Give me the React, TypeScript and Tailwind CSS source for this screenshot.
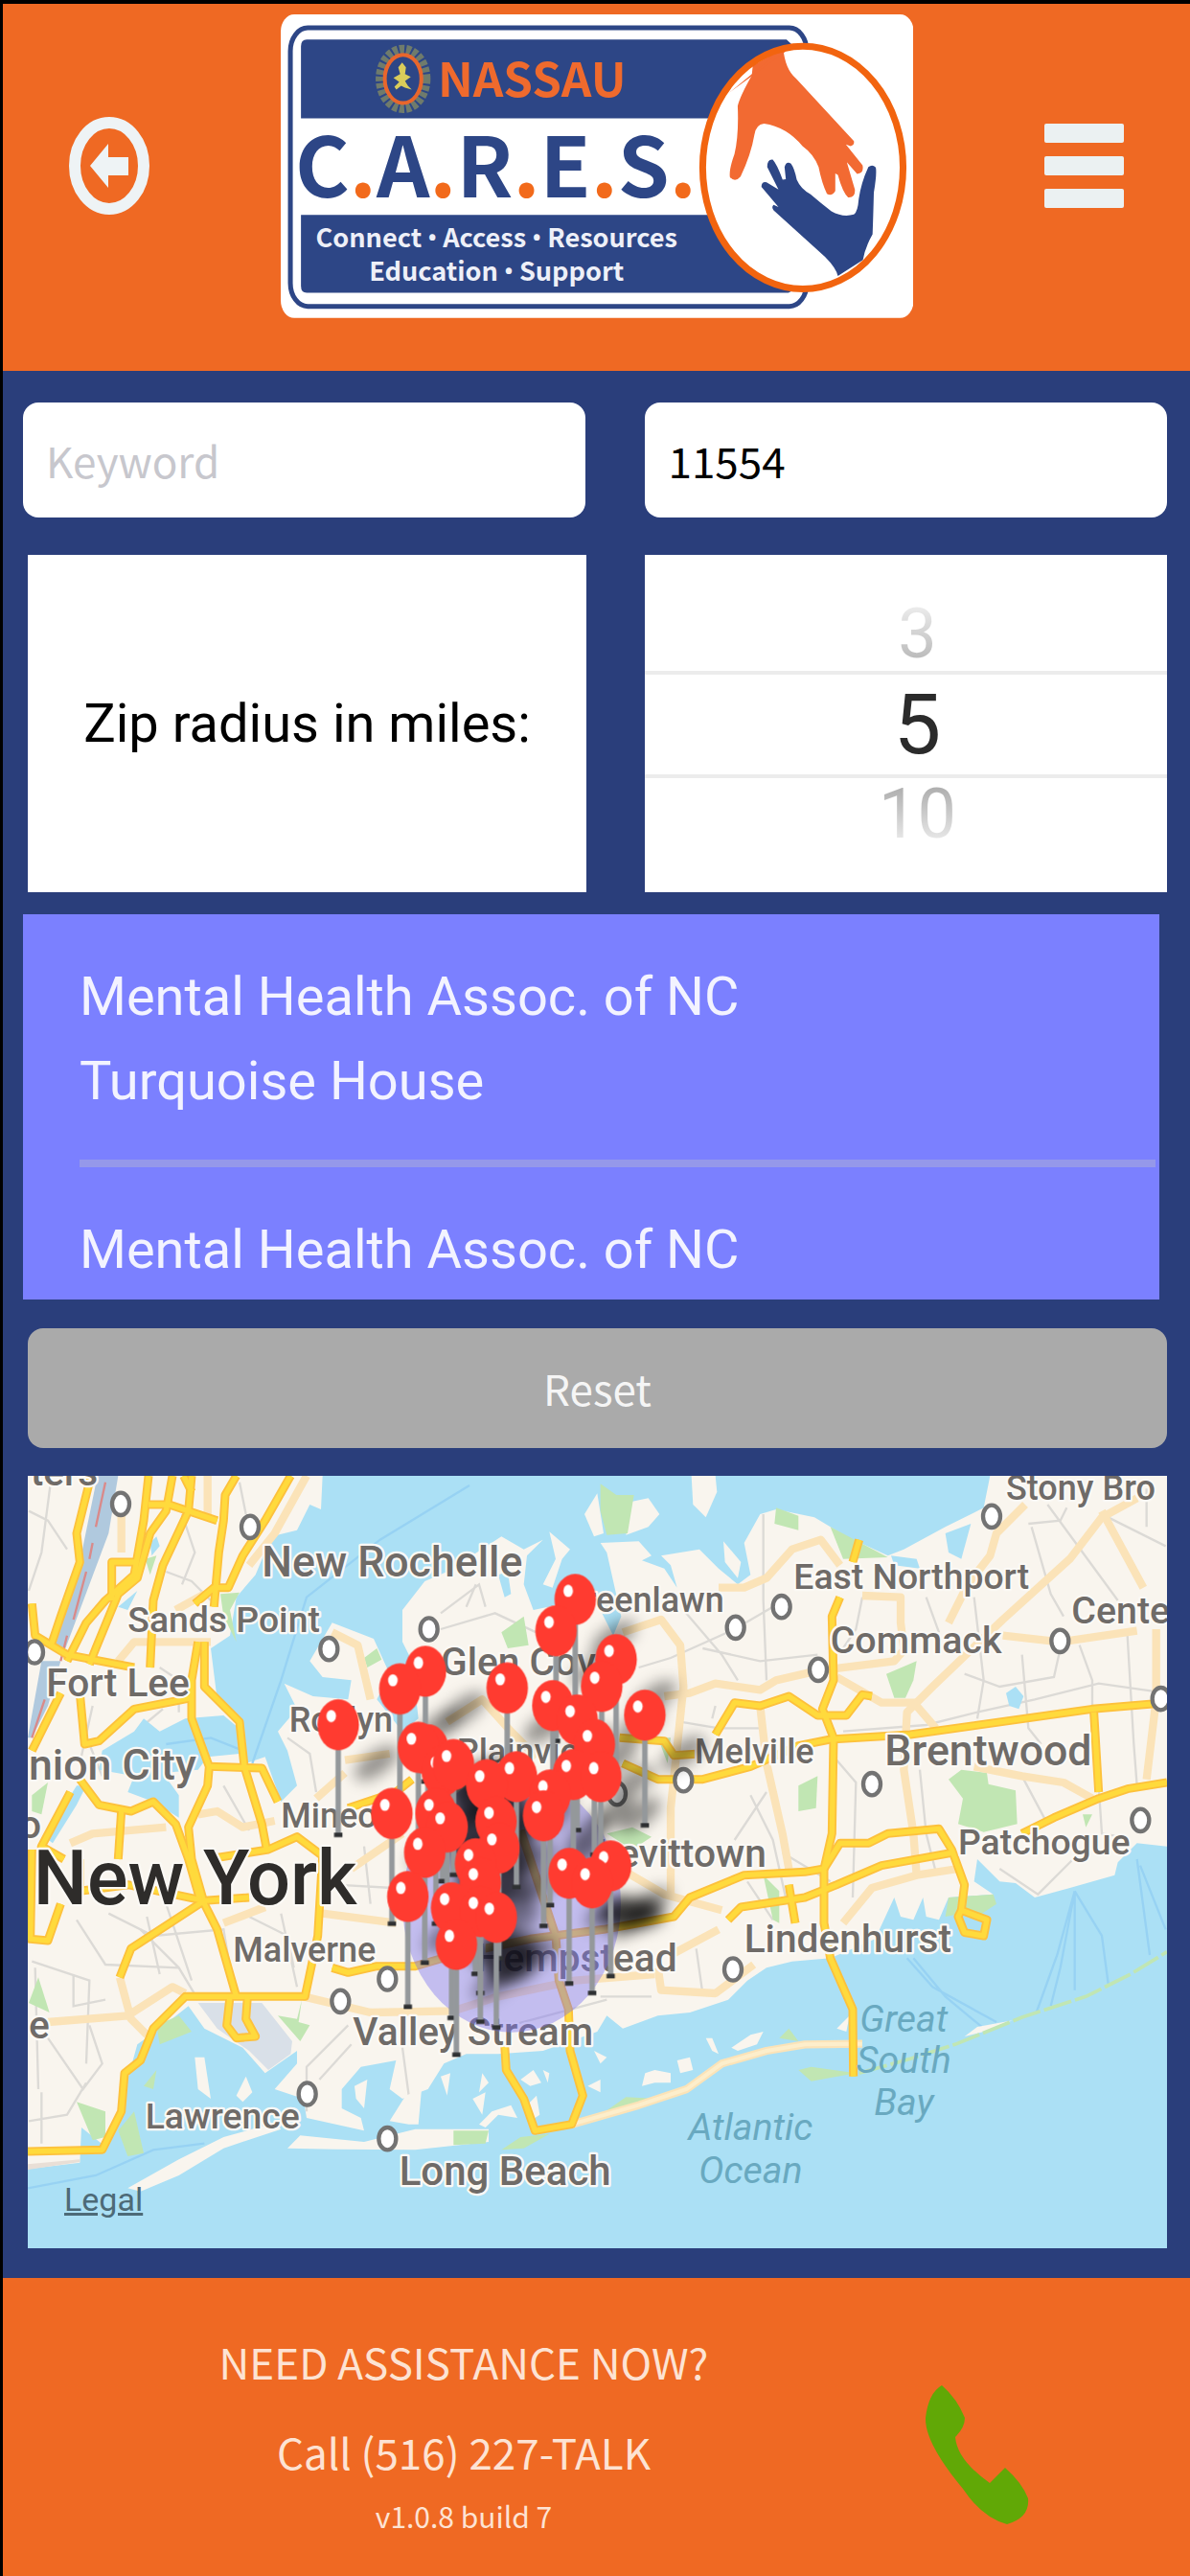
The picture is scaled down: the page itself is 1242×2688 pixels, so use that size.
import { useState } from "react";

const places = [
  { name: "New Rochelle", x: 820, y: 375, size: 134 },
  { name: "Sands Point", x: 400, y: 550, size: 112 },
  { name: "Fort Lee", x: 145, y: 750, size: 122 },
  { name: "nion City", x: 90, y: 1010, size: 134 },
  { name: "Glen Cove", x: 1380, y: 685, size: 122 },
  { name: "Roslyn", x: 905, y: 860, size: 108 },
  { name: "Mineola", x: 880, y: 1162, size: 108 },
  { name: "Malverne", x: 730, y: 1582, size: 108 },
  { name: "Valley Stream", x: 1105, y: 1842, size: 122 },
  { name: "Lawrence", x: 455, y: 2102, size: 112 },
  { name: "Long Beach", x: 1250, y: 2280, size: 126 },
  { name: "Greenlawn", x: 1755, y: 485, size: 108 },
  { name: "East Northport", x: 2485, y: 415, size: 112 },
  { name: "Commack", x: 2600, y: 615, size: 118 },
  { name: "Cente", x: 3355, y: 522, size: 118 },
  { name: "Stony Bro", x: 3150, y: 135, size: 108 },
  { name: "Plainview", x: 1430, y: 960, size: 108 },
  { name: "Melville", x: 2175, y: 960, size: 108 },
  { name: "Brentwood", x: 2770, y: 965, size: 134 },
  { name: "Patchogue", x: 3000, y: 1245, size: 112 },
  { name: "Levittown", x: 1870, y: 1285, size: 122 },
  { name: "Hempstead", x: 1490, y: 1610, size: 122 },
  { name: "Lindenhurst", x: 2330, y: 1552, size: 122 },
];

const waterNames = [
  { name: "Great", x: 2830, y: 1800 },
  { name: "South", x: 2830, y: 1930 },
  { name: "Bay", x: 2830, y: 2060 },
  { name: "Atlantic", x: 2350, y: 2140 },
  { name: "Ocean", x: 2350, y: 2275 },
];

const towns = [
  [378, 148], [783, 220], [108, 612], [1343, 540], [1030, 602], [1066, 1705],
  [1213, 1635], [962, 1995], [1213, 2135], [2303, 535], [2447, 470], [3105, 187],
  [2562, 667], [3319, 577], [2730, 1025], [3635, 758], [3571, 1138], [2140, 1013],
  [2295, 1605], [1932, 1055],
];

const pins = [
  [1801, 447], [1741, 545], [1332, 672], [1252, 727], [1929, 635], [1884, 719],
  [1588, 724], [1731, 779], [1807, 824], [1059, 839], [2019, 809], [1861, 901],
  [1340, 917], [1310, 910], [1385, 984], [1420, 964], [1795, 995], [1881, 1002],
  [1617, 1002], [1524, 1027], [1722, 1059], [1227, 1117], [1365, 1117], [1702, 1124],
  [1400, 1159], [1553, 1142], [1562, 1225], [1330, 1239], [1489, 1274], [1912, 1281],
  [1782, 1304], [1854, 1334], [1504, 1334], [1277, 1377], [1414, 1412], [1504, 1424],
  [1554, 1442], [1429, 1527],
];

const highways = [
  "M285 60L240 240L250 330L190 500L160 590",
  "M465 60L450 200L420 370L330 450L270 520L210 640",
  "M540 60L520 170L470 240L430 380L370 430L300 600L280 650",
  "M600 60L590 170L510 340L480 450L470 660",
  "M575 60L600 110M465 150L530 150L680 200",
  "M350 450L350 330L430 330",
  "M740 60L705 120L700 200L685 300L670 470",
  "M910 60L830 200L760 310L715 410L670 410L610 460",
  "M100 460L110 560L210 620L420 660",
  "M190 740L100 920",
  "M250 740L265 900L310 890L420 790L600 755",
  "M620 580L600 700L600 820L655 970L650 1030L590 1160L600 1260L640 1400L680 1480L740 1690",
  "M640 580L640 720L750 830L765 970L820 1150L835 1230",
  "M655 970L820 975L870 1080",
  "M250 1010L310 1090L410 1110L480 1080L550 1150L590 1260L630 1400",
  "M380 1110L370 1260",
  "M220 1050L130 1220L200 1260",
  "M250 1260L250 1360L400 1340L640 1390L780 1380",
  "M650 1260L840 1230L930 1190L1010 1250L995 1500L955 1690L580 1690L480 1790L440 1890L390 1930L380 2050L320 2170L87 2175",
  "M640 1390L410 1540L375 1630",
  "M100 1230L95 1510L150 1515L190 1400",
  "M720 1690L710 1780L740 1820L800 1815L770 1760L775 1690",
  "M1040 1600L1090 1615L1180 1595L1300 1595L1420 1560L1660 1510L1890 1480L2110 1440L2160 1380L2330 1310L2520 1300L2580 1290",
  "M1090 1100L1240 1050L1290 1010",
  "M1940 880L2080 890L2110 935L2190 930",
  "M1950 960L2060 1010L2200 1010L2350 970L2500 905L2600 885L2850 870L3420 790L3654 770",
  "M2240 870L2300 770L2380 780L2470 750L2560 810L2650 810L2700 745L2730 750",
  "M2690 260L2670 330M2630 440L2605 500L2610 700L2575 790L2610 880L2605 1180L2580 1290L2580 1460L2600 1570L2670 1730L2672 1940",
  "M2580 1290L2630 1210L2720 1210L2780 1180L2940 1165L2980 1230L3020 1340L3010 1420",
  "M2280 1450L2320 1410L2520 1380L2620 1340L2760 1280L2980 1240",
  "M2470 1340L2490 1460",
  "M3425 800L3440 1050M3200 1180L3300 1130L3440 1070L3530 1040L3654 1020",
  "M3010 1420L3090 1450L3080 1500L3020 1490L3000 1440Z",
  "M1580 1840L1585 1920L1640 2010L1675 2110L1790 2090L1825 2000L1785 1860L1780 1730L1750 1640L1740 1500L1630 1170",
];

const roads = [
  "M960 60L860 240L780 340M650 60L650 200M380 180L380 300",
  "M550 480L640 430M370 640L420 580L660 580",
  "M1040 550L1120 590L1160 760M1080 950L1220 930M990 1070L1080 990",
  "M620 1120L680 1110L760 1160L860 1140M220 1210L290 1180L520 1160",
  "M700 1460L830 1410M1010 1430L1240 1460M1100 1290L1260 1180",
  "M150 1770L400 1750L540 1660L580 1680M375 1630L410 1760L460 1810",
  "M950 1690L1160 1740L1420 1735L1560 1690L1800 1640L2050 1620",
  "M1400 830L1510 760L1600 860L1680 940",
  "M1950 550L2070 510L2130 590L2140 720L2100 1100L2100 1380",
  "M2250 410L2330 410L2400 380L2480 290L2570 260L2630 340",
  "M2080 750L2160 740L2240 710L2380 730L2430 700L2560 670L2800 640L2870 560",
  "M2380 780L2400 960L2450 1180L2470 1290",
  "M2700 435L2820 440L2820 520L2830 600M2620 690L2760 770L2870 770",
  "M3210 150L3120 240L3100 310L3030 400L2970 520",
  "M3560 130L3450 190L3350 320L3140 510L2920 720L2840 800L2830 980L2860 1180L2870 1310",
  "M3450 170L3580 410M3620 540L3620 760L3590 1010",
  "M3140 560L3320 580L3560 545M2870 780L2930 850",
  "M3050 970L3200 1000L3330 1020L3420 1070",
  "M2640 1460L2730 1350L2870 1310L3000 1290",
  "M1960 1300L2080 1370L2260 1420M2100 1560L2250 1480M2060 1600L2070 1670L2240 1680L2360 1590",
];

const streets = [
  "M90 170L150 200L210 290M160 70L130 300L90 420M750 80L770 180M520 360L600 390L660 450M570 180L610 300L570 400",
  "M290 780L250 960M450 840L510 790M500 660L560 700L560 800M700 1030L780 1170M320 1000L280 900",
  "M100 1580L280 1640L270 1900M110 1600L120 1980M230 1620L230 1720L330 1700M240 1450L330 1590L560 1600",
  "M150 1820L260 1980L320 1900L280 1780M90 2080L210 2060L270 1960M130 1990L130 2150M440 1480L560 1600L620 1700",
  "M460 1440L500 1620M520 1400L600 1640M340 1430L480 1500L700 1480L720 1600M780 1440L900 1500L920 1600M880 1430L930 1660",
  "M1090 1780L960 1910L960 2050M1100 1840L1000 1950M1260 1850L1280 2000L1260 2110M1050 1340L1230 1350M1140 1220L1160 1400",
  "M1380 490L1500 400L1520 470M1380 540L1550 490L1700 560M1490 400L1460 470M900 880L970 930L990 1050",
  "M2000 660L2100 630L2300 540L2420 470M2140 480L2260 620L2310 700M2200 600L2380 640L2560 620M2390 180L2390 450L2400 700",
  "M2130 830L2250 850L2380 850M2400 1050L2300 1200M2240 780L2230 820M2350 1060L2420 1200L2460 1380M2620 950L2680 1020L2670 1380",
  "M2700 440L2680 540L2640 600M2900 440L2940 550M3050 440L3080 700L3060 820M3020 680L3130 720L3300 690L3320 600M3230 220L3290 430L3330 500M3280 150L3500 450M3470 190L3650 280M3590 100L3590 220",
  "M2640 860L2900 840L3060 800L3240 760L3440 710L3650 740M3200 620L3220 850L3260 900M3380 590L3420 700L3420 800M3530 560L3550 900L3560 1030M2880 980L2900 1180L2930 1300M3200 1000L3280 1150M3440 1030L3450 1180L3510 1190",
  "M3130 1290L3250 1370L3360 1260M2450 1240L2600 1330M2340 1330L2420 1450M2180 1540L2200 1680M1880 1690L2040 1690M1600 1780L1900 1700M3220 210L3320 200L3340 160",
];

const parks = [
  "M1880 85L1930 120L1985 120L1965 240L1900 245L1880 170Z",
  "M1570 550L1640 500L1655 590L1590 600Z",
  "M2430 160L2500 185L2500 230L2425 210Z",
  "M2600 220L2780 315L2640 320Z",
  "M690 430L750 425L720 480L740 580L700 500Z",
  "M455 320L490 310L470 370Z",
  "M100 1060L150 1020L130 1120L100 1110Z",
  "M1140 630L1180 600L1195 635L1150 660Z",
  "M2775 680L2870 640L2860 700L2835 755L2800 755Z",
  "M2970 1010L3010 980L3090 990L3095 1025L3180 1045L3185 1150L3080 1175L3000 1150L3015 1070Z",
  "M2500 1030L2560 1000L2555 1100L2500 1110Z",
  "M2100 880L2090 960L2060 880Z",
  "M90 1710L120 1630L155 1740Z",
  "M870 1750L930 1760L945 1700L935 1770L970 1780L940 1830Z",
  "M490 1780L560 1750L600 1800L500 1840Z",
  "M370 2110L420 2050L450 2180L400 2190Z",
  "M240 2020L330 2050L330 2130L290 2140Z",
  "M450 1970L490 1920L480 1980Z",
  "M1420 2110L1530 2110L1520 2150L1420 2155Z",
  "M1570 2170L1630 2130L1720 2120L1640 2165Z",
  "M1880 2060L1960 2005L2060 2010Z",
  "M2440 1820L2470 1790L2500 1830Z",
  "M2500 1920L2540 1910L2680 1930L2540 1955Z",
  "M2960 1440L2970 1380L3110 1370L3120 1400L3060 1440L3010 1430Z",
  "M2390 1310L2440 1360L2440 1460L2420 1450Z",
  "M3390 1120L3420 1120L3400 1160Z",
  "M1900 1180L1980 1160L2040 1190L1980 1230Z",
];

const islands = [
  "M1830 180L1870 115L1890 240L1860 250Z",
  "M1980 140L2030 130L2065 180L2030 220L1960 245Z",
  "M2165 60L2240 60L2245 110L2210 190L2170 150Z",
  "M1720 235L1785 290L1760 320L1730 410L1700 400L1740 320Z",
  "M2265 265L2320 330L2310 380L2270 330Z",
  "M400 2290L560 2200L700 2130L860 2085L880 2105L700 2165L560 2250L440 2300Z",
  "M900 2165L940 2125L1140 2145L1300 2105L1530 2105L1530 2145L1300 2170L1050 2168Z",
  "M610 1880L640 1880L660 2010L620 1980Z",
  "M740 2000L770 1940L790 1990L760 2020Z",
  "M1110 1970L1150 1950L1140 2040L1115 2010Z",
  "M1270 2000L1320 1980L1310 2090L1280 2090L1220 2080Z",
  "M1380 1940L1410 1930L1400 2000Z",
  "M1480 2010L1520 1990L1510 2060Z",
  "M1630 1950L1670 1920L1695 1960L1660 1970Z",
  "M1650 2030L1680 2000L1690 2060L1660 2080Z",
  "M1500 2090L1540 2050L1600 2030L1620 2070L1560 2060L1520 2100Z",
  "M1860 1860L1900 1880L1880 1900Z",
  "M1840 1970L1880 1950L1880 1990Z",
  "M2010 1970L2020 1930L2050 1920L2100 1930L2100 1960L2050 1960Z",
  "M2120 1890L2160 1880L2170 1920L2130 1930Z",
  "M2290 1850L2350 1810L2390 1800L2370 1840L2310 1860Z",
  "M2210 1820L2230 1820L2250 1870L2230 1860Z",
  "M2620 1790L2660 1750L2650 1800Z",
  "M3020 1815L3060 1785L3170 1765L3080 1800Z",
  "M1500 1990L1510 1930L1530 1960Z",
  "M1700 1920L1720 1930L1715 1960Z",
];

function AreaMap() {
  return (
    <svg viewBox="87 60 3567 2418" className="block w-full" role="img" aria-label="Map of providers">
      <defs>
        <filter id="soft" x="-50%" y="-50%" width="200%" height="200%">
          <feGaussianBlur stdDeviation="22" />
        </filter>
      </defs>
      <rect x="87" y="60" width="3567" height="2418" fill="#f9f5ee" />
      <g fill="none" stroke="#dcdad6" strokeWidth="7">
        {streets.map((d) => <path key={d} d={d} />)}
      </g>

      {/* Water */}
      <g fill="#abe0f5">
        <path d="M1010 60L1005 165L970 150L930 230L850 250L800 370L740 440L720 560L660 600L680 760L760 830L770 960L830 940L880 1080L930 1030L900 920L870 860L930 790L890 710L980 750L1090 760L1100 700L1010 690L970 640L1040 520L1170 570L1220 680L1180 760L1260 860L1310 820L1290 640L1260 580L1260 480L1330 390L1400 360L1570 250L1640 290L1700 260L1650 310L1640 400L1670 480L1860 440L1920 560L1945 500L1900 300L1880 270L2000 265L2040 310L2010 325L2080 350L2120 410L2100 340L2070 310L2190 290L2250 350L2310 400L2350 370L2330 270L2380 180L2430 165L2550 190L2650 250L2780 310L2830 290L2960 220L3080 160L3100 60Z" />
        <path d="M2960 240L3040 210L3010 320L2970 300Z" />
        <path d="M2790 310L2870 320L2880 350L2800 340Z" />
        <path d="M1560 370L1590 360L1600 430L1580 440Z" />
        <path d="M3150 740L3180 720L3205 750L3190 790L3160 780Z" />
        <path d="M450 820L500 860L580 820L700 810L760 860L750 930L650 940L620 980L510 990L560 1060L560 1130L480 1080L400 1050L420 1000L310 980L320 920L420 860Z" />
        <path d="M240 1030L270 1030L240 1090L165 1210L145 1195L215 1070Z" />
        <path d="M470 270L490 250L500 280L475 310ZM370 470L430 420L400 480Z" />
        <path d="M87 2230L250 2210L255 2100L330 2160L380 2020L430 1840L500 1790L590 1720L640 1790L760 1850L830 1930L930 1860L930 1900L860 1980L950 2010L960 2070L1140 2110L1130 2070L1070 2040L1070 1980L1130 1910L1240 1890L1220 1980L1260 2010L1340 1980L1390 1900L1460 1870L1560 1870L1700 1860L1870 1800L1900 1750L1950 1790L2060 1750L2160 1740L2280 1700L2340 1640L2400 1600L2480 1580L2600 1570L2740 1510L2800 1380L2820 1440L2860 1450L2890 1380L2900 1440L2940 1450L2970 1380L3110 1370L3050 1330L3060 1260L3130 1330L3180 1335L3240 1380L3350 1350L3490 1310L3500 1270L3560 1210L3654 1220L3654 2478L87 2478Z" />
      </g>
      <path d="M305 60L370 60L340 240L205 600L160 590L250 330ZM130 640L190 640L150 780L100 880L87 880Z" fill="#b0c9de" />
      <path d="M330 80L300 220M290 270L280 320M270 360L230 510M210 560L190 640M140 760L100 880" fill="none" stroke="#d98a8a" strokeWidth="7" />
      <path d="M620 1710L820 1710L915 1830L910 1870L840 1920L780 1860L680 1790Z" fill="#d9e0e8" />
      <g fill="none" stroke="#97d2f3" strokeWidth="7">
        <path d="M1470 90L1190 260L960 440L880 700L790 960" />
        <path d="M520 900L660 880L760 920" />
        <path d="M87 2290L300 2250L480 2170L640 2150" />
        <path d="M3365 1360L3310 1560L3245 1740M3365 1360L3320 1600L3290 1720M3365 1360L3365 1670M3365 1360L3450 1500L3470 1650" />
        <path d="M3560 1260L3600 1560M3570 1280L3650 1480M2840 1570L2920 1660L3120 1770M2860 1570L2960 1690L3080 1790" />
      </g>
      <path d="M87 2215L250 2200L250 2208L87 2232Z" fill="#e9dfd6" />

      {/* Barrier islands and marshes */}
      <g fill="#f9f5ee">
        {islands.map((d) => <path key={d} d={d} />)}
      </g>
      <g fill="#c1e6b3">
        {parks.map((d) => <path key={d} d={d} />)}
      </g>
      <path d="M2690 1930L2850 1885L2990 1840L3200 1755L3400 1690L3540 1620L3654 1550" fill="none" stroke="#c1e6b3" strokeWidth="11" strokeDasharray="90 12" />

      <g fill="none" stroke="#fbe3b8" strokeWidth="25" strokeLinejoin="round">
        {roads.map((d) => <path key={d} d={d} />)}
        <path d="M1790 2090L2000 2030L2150 1980L2260 1900L2400 1860L2520 1840L2700 1838" />
      </g>
      <g fill="none" stroke="#fdeecb" strokeWidth="12">
        <path d="M1790 2090L2000 2030L2150 1980L2260 1900L2400 1860L2520 1840L2700 1838" />
      </g>
      <g fill="none" stroke="#fdc13c" strokeWidth="27" strokeLinejoin="round">
        {highways.map((d) => <path key={d} d={d} />)}
      </g>
      <g fill="none" stroke="#ffda3c" strokeWidth="16" strokeLinejoin="round">
        {highways.map((d) => <path key={d} d={d} />)}
      </g>

      {/* Labels */}
      <g fill="#fff" stroke="#737373" strokeWidth="13">
        {towns.map(([x, y]) => <ellipse key={`${x}-${y}`} cx={x} cy={y} rx="27" ry="35" />)}
      </g>
      <g
        fill="#6f6b68"
        stroke="#fbf9f5"
        strokeWidth="14"
        strokeLinejoin="round"
        paintOrder="stroke"
        fontFamily="Roboto, sans-serif"
        fontWeight="500"
      >
        {places.map((place) => (
          <text key={place.name} x={place.x} y={place.y} fontSize={place.size}>{place.name}</text>
        ))}
        <text x="95" y="90" fontSize="122">ters</text>
        <text x="90" y="1820" fontSize="122">e</text>
        <text x="60" y="1195" fontSize="122">o</text>
        <text x="104" y="1402" fontSize="238" fill="#2e2c2a">New York</text>
      </g>
      <g fill="#69a9c0" fontFamily="Roboto, sans-serif" fontStyle="italic" fontSize="118" textAnchor="middle">
        {waterNames.map((item) => (
          <text key={item.name} x={item.x} y={item.y}>{item.name}</text>
        ))}
      </g>

      {/* Search radius */}
      <ellipse cx="1602" cy="1400" rx="342" ry="402" fill="#7a6ff0" fillOpacity="0.42" />

      {/* Pin shadows */}
      <g filter="url(#soft)" fill="#000">
        {pins.map(([x, y]) => (
          <ellipse
            key={`${x}-${y}`}
            cx={x + 120}
            cy={y + 120}
            rx="80"
            ry="36"
            opacity="0.4"
            transform={`rotate(-35 ${x + 120} ${y + 120})`}
          />
        ))}
        <ellipse cx="1540" cy="1180" rx="130" ry="230" opacity="0.7" />
        <ellipse cx="1980" cy="1430" rx="100" ry="50" opacity="0.65" />
        <ellipse cx="1590" cy="1570" rx="90" ry="80" opacity="0.65" />
      </g>

      {/* Pins */}
      {pins.map(([x, y]) => (
        <g key={`${x}-${y}`}>
          <path d={`M${x} ${y}V${y + 345}`} stroke="#94989b" strokeWidth="17" />
          <path d={`M${x - 13} ${y + 345}H${x + 13}`} stroke="#2f3133" strokeWidth="14" />
        </g>
      ))}
      {pins.map(([x, y]) => (
        <g key={`${x}-${y}`}>
          <ellipse cx={x} cy={y} rx="65" ry="80" fill="#ff3b30" />
          <ellipse cx={x - 22} cy={y - 27} rx="15" ry="19" fill="#fff" />
        </g>
      ))}
    </svg>
  );
}

function CaresLogo() {
  return (
    <svg viewBox="295 15 657 315" className="block w-full" role="img" aria-label="Nassau C.A.R.E.S.">
      <rect x="295" y="15" width="657" height="315" rx="14" ry="18" fill="#fff" />
      <rect x="305" y="29" width="536" height="289" rx="18" ry="24" fill="none" stroke="#2d4686" strokeWidth="5" />
      <path d="M316 48Q316 41 322 41H820Q842 60 842 80V123H316ZM316 223H842V270Q842 295 822 304H322Q316 304 316 297Z" fill="#2d4686" />

      <g fill="none">
        <ellipse cx="422" cy="82" rx="24" ry="31" stroke="#6f7b6c" strokeWidth="9" strokeDasharray="5 2" />
        <ellipse cx="422" cy="82" rx="19" ry="25" stroke="#e8662c" strokeWidth="4" />
      </g>
      <path d="M421 65L425 70L424 77L430 80L424 84L427 89L431 93L424 91L420 89L415 93L413 90L418 85L412 81L419 77L417 70Z" fill="#d9cc5a" />

      <g fontFamily="'Noto Sans CJK SC', sans-serif" fontWeight="700">
        <text x="458" y="101" fontSize="49" fill="#ef6a2d">NASSAU</text>
        <text x="310" y="205" fontSize="86" fill="#2d4686">
          C<tspan fill="#f26a1b">.</tspan>A<tspan fill="#f26a1b">.</tspan>R<tspan fill="#f26a1b">.</tspan>E<tspan fill="#f26a1b">.</tspan>S<tspan fill="#f26a1b">.</tspan>
        </text>
      </g>
      {/* Roboto first only for the bullets, which are full width in the CJK face */}
      <g fontFamily="'Noto Sans CJK SC', sans-serif" fontWeight="700" fontSize="27" fill="#eef0f8" textAnchor="middle">
        <text x="519" y="257">
          Connect <tspan fontFamily="Roboto, sans-serif">•</tspan> Access <tspan fontFamily="Roboto, sans-serif">•</tspan> Resources
        </text>
        <text x="519" y="292">
          Education <tspan fontFamily="Roboto, sans-serif">•</tspan> Support
        </text>
      </g>

      <ellipse cx="837" cy="174" rx="104" ry="127" fill="#fff" />
      <g transform="translate(660 0) scale(0.3333)">
        <path d="M375 205L470 150Q475 215 510 245L690 440Q692 452 680 455L665 450L717 515Q722 540 700 542L668 505L693 590Q695 617 672 615Q655 600 640 545L632 540L632 595Q622 612 606 604Q590 570 580 520Q565 480 530 455Q480 395 410 385Q385 387 380 420Q370 480 337 550Q320 570 304 552Q300 530 318 480Q332 420 328 330Q335 300 372 235Z" fill="#f26a32" />
        <path d="M375 235L300 290L470 150L478 160Z" fill="#f26a32" />
        <path d="M735 520Q748 510 758 522Q762 540 752 600Q750 680 748 730Q725 770 718 810L640 860Q635 835 600 800L440 655Q432 645 440 638L455 645L402 582Q402 565 418 568L455 590L420 520Q420 495 437 497Q450 510 468 560L478 558L474 520Q480 500 494 510Q505 525 512 560Q525 590 555 605Q590 635 620 658Q655 678 690 668Q702 660 705 620Q712 570 735 520Z" fill="#2d4686" />
      </g>
      <ellipse cx="837" cy="174" rx="104" ry="126" fill="none" stroke="#f2640f" strokeWidth="7" />
    </svg>
  );
}

function Header() {
  return (
    <header className="flex items-center justify-between bg-[#ef6923] px-[69px] pt-[11px] pb-[55px]">
      <button type="button" aria-label="Back">
        <svg viewBox="0 0 84 104" className="block h-[104px] w-[84px]">
          <ellipse cx="42" cy="52" rx="36" ry="45" fill="none" stroke="#eef3f5" strokeWidth="12" />
          <path d="M22 52L41 29V43H62V62H41V75Z" fill="#eef3f5" />
        </svg>
      </button>
      <div className="w-[60%]">
        <CaresLogo />
      </div>
      <button type="button" aria-label="Menu" className="flex flex-col gap-[14px]">
        <span className="h-5 w-[83px] rounded-xs bg-[#ebf1f2]" />
        <span className="h-5 w-[83px] rounded-xs bg-[#ebf1f2]" />
        <span className="h-5 w-[83px] rounded-xs bg-[#ebf1f2]" />
      </button>
    </header>
  );
}

function RadiusPicker() {
  const [radius, setRadius] = useState("5");
  const options = [
    { value: "3", style: "h-[121px] items-end", text: "bg-linear-to-b from-[#f4f4f4] to-[#b0b0b0] bg-clip-text text-[72px] leading-[76px] text-transparent" },
    { value: "5", style: "h-[112px] items-center border-y-4 border-[#ececec]", text: "text-[88px] leading-[88px] text-[#2b2b2b]" },
    { value: "10", style: "h-[119px] items-start", text: "bg-linear-to-b from-[#a5a5a5] to-[#f4f4f4] bg-clip-text text-[72px] leading-[76px] text-transparent" },
  ];

  return (
    <fieldset className="bg-white">
      <legend className="sr-only">Zip radius</legend>
      {options.map((option) => (
        <label key={option.value} className={`flex justify-center pl-6 ${option.style}`}>
          <input
            type="radio"
            name="radius"
            value={option.value}
            checked={radius === option.value}
            onChange={() => setRadius(option.value)}
            className="sr-only"
          />
          <span className={option.text}>{option.value}</span>
        </label>
      ))}
    </fieldset>
  );
}

export default function App() {
  const [keyword, setKeyword] = useState("");
  const [zip, setZip] = useState("11554");

  const reset = () => {
    setKeyword("");
    setZip("");
  };

  return (
    <div className="flex min-h-screen flex-col overflow-hidden border-t-4 border-l-[3px] border-black bg-[#2a3e7b] font-[Roboto,sans-serif]">
      <Header />

      <main className="flex flex-col pt-[33px] pb-[31px]">
        {/* Search fields */}
        <div className="grid grid-cols-[588fr_545fr] gap-[62px] pr-6 pl-[21px] font-['Noto_Sans_CJK_SC',sans-serif]">
          <input
            type="text"
            aria-label="Keyword"
            placeholder="Keyword"
            value={keyword}
            onChange={(e) => setKeyword(e.target.value)}
            className="h-[120px] w-full rounded-2xl bg-white px-6 text-[44px] placeholder:text-[#c7c7cd]"
          />
          <input
            type="text"
            aria-label="Zip code"
            value={zip}
            onChange={(e) => setZip(e.target.value)}
            className="h-[120px] w-full rounded-2xl bg-white px-6 text-[44px] text-black"
          />
        </div>

        <div className="mt-[39px] grid grid-cols-[583fr_545fr] gap-[61px] pr-6 pl-[26px]">
          <div className="flex items-center justify-center bg-white text-[56px] text-black">
            Zip radius in miles:
          </div>
          <RadiusPicker />
        </div>

        {/* Results */}
        <ul className="mt-[23px] mr-8 ml-[21px] h-[402px] overflow-hidden bg-[#7b80ff] pl-[59px] text-[56px] leading-[88px] text-[#f3f3ff]">
          <li className="mr-1 border-b-8 border-[#9598ea] pt-[42px] pb-[38px]">
            Mental Health Assoc. of NC
            <br />
            Turquoise House
          </li>
          <li className="pt-[42px]">Mental Health Assoc. of NC</li>
        </ul>

        <div className="mt-[30px] flex flex-col gap-[29px] pr-6 pl-[26px]">
          <button
            type="button"
            onClick={reset}
            className="h-[125px] rounded-2xl bg-[#aaaaaa] font-['Noto_Sans_CJK_SC',sans-serif] text-[44px] text-[#f5f5f5]"
          >
            Reset
          </button>

          <div className="relative">
            <AreaMap />
            <a href="#legal" className="absolute bottom-[34px] left-[38px] text-[34px] leading-none text-[#4d6a77] underline">
              Legal
            </a>
          </div>
        </div>
      </main>

      <footer className="flex flex-1 items-start bg-[#ef6923] pr-[168px] font-['Noto_Sans_CJK_SC',sans-serif] text-[#fde3d3]">
        <div className="flex-1 pt-10 text-center text-[44px] leading-[94px]">
          <p>NEED ASSISTANCE NOW?</p>
          <p>Call (516) 227-TALK</p>
          <p className="text-[30px] leading-10">v1.0.8 build 7</p>
        </div>
        <a href="tel:5162278255" aria-label="Call" className="mt-[112px]">
          <svg viewBox="0 0 109 145" className="block h-[145px] w-[109px]">
            <path d="M18 0Q34 14 42 34Q42 44 32 54Q34 78 68 102L84 86Q102 102 108 118Q110 138 86 145Q60 138 40 108Q0 60 1 34Q4 8 18 0Z" fill="#61a806" />
          </svg>
        </a>
      </footer>
    </div>
  );
}
